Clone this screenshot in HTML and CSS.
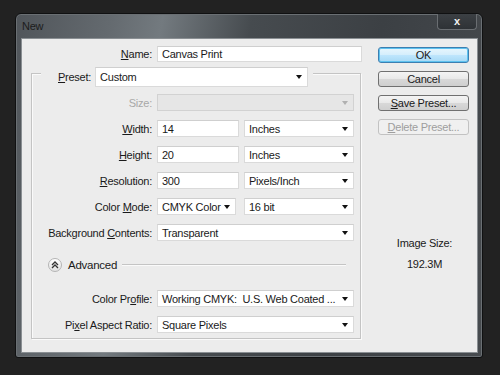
FILE: index.html
```html
<!DOCTYPE html>
<html lang="en">
<head>
    <meta charset="UTF-8">
    <title>New</title>
    <link rel="stylesheet" href="styles.css">
</head>
<body>
    <div class="window">
        <div class="titlebar">
            <span class="title">New</span>
            <span class="close">x</span>
        </div>
        <div class="client">
            <div class="main">
                <div class="row name-row">
                    <label><u>N</u>ame:</label>
                    <div class="field">Canvas Print</div>
                </div>

                <div class="group">
                    <div class="group-head">
                        <div class="head-cover">
                            <label><u>P</u>reset:</label>
                            <div class="select preset">Custom<span class="arrow"></span></div>
                        </div>
                    </div>

                    <div class="rows">
                        <div class="row">
                            <label class="disabled">Size:</label>
                            <div class="select disabled-box"><span class="arrow grey"></span></div>
                        </div>
                        <div class="row">
                            <label><u>W</u>idth:</label>
                            <div class="pair">
                                <div class="field num">14</div>
                                <div class="select unit">Inches<span class="arrow"></span></div>
                            </div>
                        </div>
                        <div class="row">
                            <label><u>H</u>eight:</label>
                            <div class="pair">
                                <div class="field num">20</div>
                                <div class="select unit">Inches<span class="arrow"></span></div>
                            </div>
                        </div>
                        <div class="row">
                            <label><u>R</u>esolution:</label>
                            <div class="pair">
                                <div class="field num">300</div>
                                <div class="select unit">Pixels/Inch<span class="arrow"></span></div>
                            </div>
                        </div>
                        <div class="row">
                            <label>Color <u>M</u>ode:</label>
                            <div class="pair mode">
                                <div class="select">CMYK Color<span class="arrow"></span></div>
                                <div class="select unit">16 bit<span class="arrow"></span></div>
                            </div>
                        </div>
                        <div class="row">
                            <label>Background <u>C</u>ontents:</label>
                            <div class="select">Transparent<span class="arrow"></span></div>
                        </div>
                    </div>

                    <div class="advanced">
                        <span class="toggle">
                            <svg width="8" height="8" viewBox="0 0 8 8">
                                <path d="M1 4 L4 1 L7 4 M1 7 L4 4 L7 7" fill="none" stroke="#333" stroke-width="1.3"/>
                            </svg>
                        </span>
                        <span class="adv-text">Advanced</span>
                        <span class="adv-line"></span>
                    </div>

                    <div class="rows">
                        <div class="row">
                            <label>Color Pr<u>o</u>file:</label>
                            <div class="select">Working CMYK:&nbsp; U.S. Web Coated ...<span class="arrow"></span></div>
                        </div>
                        <div class="row">
                            <label>Pi<u>x</u>el Aspect Ratio:</label>
                            <div class="select">Square Pixels<span class="arrow"></span></div>
                        </div>
                    </div>
                </div>
            </div>

            <div class="side">
                <div class="btn default">OK</div>
                <div class="btn">Cancel</div>
                <div class="btn"><u>S</u>ave Preset...</div>
                <div class="btn off"><u>D</u>elete Preset...</div>
                <div class="image-size">
                    <p>Image Size:</p>
                    <p>192.3M</p>
                </div>
            </div>
        </div>
    </div>
</body>
</html>
```

FILE: styles.css
```css
* {
    margin: 0;
    padding: 0;
    box-sizing: border-box;
}
body {
    background: #222222;
    font-family: "Liberation Sans", Arial, sans-serif;
    font-size: 11px;
    letter-spacing: -0.25px;
    color: #1a1a1a;
    width: 500px;
    height: 375px;
    overflow: hidden;
    padding: 13px 0 0 15px;
}
u {
    text-decoration: underline;
    text-underline-offset: 1px;
}
.window {
    width: 468px;
    height: 345px;
    border: 1px solid #101112;
    border-radius: 6px 6px 3px 3px;
    background: linear-gradient(100deg, #50555a 0%, #646a6f 18%, #737a7f 28%, #464b4f 45%, #3c4044 70%, #474b4f 100%);
    box-shadow: inset 0 0 0 1px #6a6f73;
    padding: 0 4px 4px 5px;
}
.titlebar {
    height: 24px;
    display: flex;
    align-items: center;
    justify-content: space-between;
}
.title {
    color: #1c1c1c;
    font-size: 11px;
    padding-left: 1px;
}
.close {
    align-self: flex-start;
    width: 40px;
    height: 16px;
    margin-right: 1px;
    border: 1px solid #6a6e72;
    border-top: none;
    border-radius: 0 0 4px 4px;
    background: linear-gradient(#3c4044, #2e3236);
    color: #f2f2f2;
    font-weight: bold;
    font-size: 11px;
    text-align: center;
    line-height: 14px;
}
.client {
    height: 315px;
    background: #ececec;
    border: 1px solid #8a8f93;
    display: flex;
    padding: 7px 0 0 9px;
}
.main {
    width: 332px;
}
.row {
    display: grid;
    grid-template-columns: 120px 197px;
    column-gap: 5px;
    align-items: center;
    height: 17px;
}
.row label {
    text-align: right;
    white-space: nowrap;
}
.name-row {
    grid-template-columns: 121px 205px;
    height: 16px;
}
.field,
.select {
    height: 100%;
    background: #ffffff;
    border: 1px solid #dadada;
    border-top-color: #cfcfcf;
    padding: 0 4px;
    display: flex;
    align-items: center;
    white-space: nowrap;
    overflow: hidden;
    position: relative;
}
.select .arrow {
    position: absolute;
    right: 5px;
    top: 50%;
    margin-top: -2px;
    border-left: 3.5px solid transparent;
    border-right: 3.5px solid transparent;
    border-top: 4px solid #111;
}
.select .arrow.grey {
    border-top-color: #b0b0b0;
}
.disabled {
    color: #a8a8a8;
}
.disabled-box {
    background: #e6e6e6;
    border-color: #d2d2d2;
}
.pair {
    display: grid;
    grid-template-columns: 82px 110px;
    column-gap: 5px;
    height: 100%;
}
.pair.mode {
    grid-template-columns: 79px 110px;
    column-gap: 8px;
}
.group {
    margin-top: 11px;
    width: 330px;
    height: 266px;
    border: 1px solid #c4c4c4;
    box-shadow: 1px 1px 0 #fafafa, inset 1px 1px 0 #fafafa;
}
.group-head {
    margin-top: -7px;
    padding-left: 9px;
    height: 20px;
    display: flex;
}
.head-cover {
    background: #ececec;
    display: flex;
    align-items: center;
    gap: 4px;
    padding: 0 5px 0 17px;
}
.select.preset {
    width: 213px;
    height: 20px;
}
.rows {
    display: flex;
    flex-direction: column;
    gap: 9px;
}
.group-head + .rows {
    margin-top: 7px;
}
.advanced {
    display: flex;
    align-items: center;
    height: 16px;
    margin: 16px 0 17px 16px;
}
.toggle {
    width: 14px;
    height: 14px;
    border-radius: 50%;
    border: 1px solid #b4b4b4;
    background: linear-gradient(#ffffff, #e2e2e2);
    display: flex;
    align-items: center;
    justify-content: center;
}
.adv-text {
    margin-left: 6px;
    font-size: 11.5px;
}
.adv-line {
    margin-left: 5px;
    width: 224px;
    height: 2px;
    border-top: 1px solid #c4c4c4;
    border-bottom: 1px solid #fafafa;
}
.side {
    margin-left: 15px;
    padding-top: 1px;
    width: 91px;
    display: flex;
    flex-direction: column;
    gap: 8px;
}
.btn {
    height: 16px;
    border: 1px solid #707070;
    border-radius: 3px;
    background: linear-gradient(#f4f4f4 0%, #e8e8e8 50%, #d8d8d8 51%, #cfcfcf 100%);
    text-align: center;
    line-height: 14px;
}
.btn.default {
    border-color: #3c7fb1;
    background: linear-gradient(#e8f6fd 0%, #d4eefc 50%, #bee6fd 51%, #a7d9f5 100%);
    box-shadow: inset 0 0 0 1px #5ec2ef;
}
.btn.off {
    border-color: #c2c2c2;
    background: #f0f0f0;
    color: #9e9e9e;
}
.image-size {
    margin-top: 94px;
    text-align: center;
    padding-left: 2px;
}
.image-size p {
    margin-bottom: 9px;
}
```
